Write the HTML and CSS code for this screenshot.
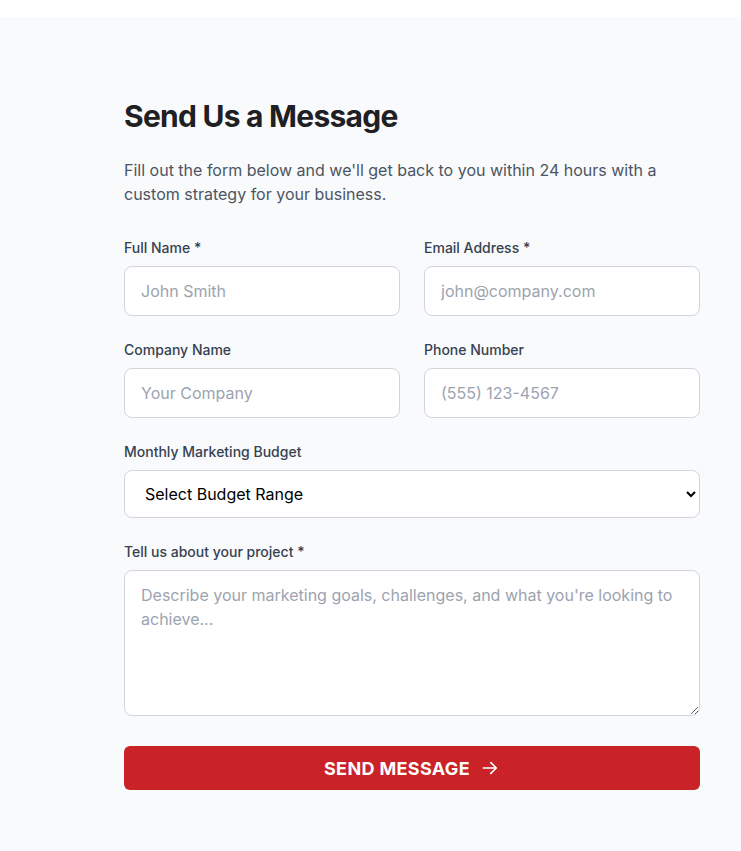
FILE: index.html
```html
<!DOCTYPE html>
<html lang="en">
<head>
<meta charset="utf-8">
<title>Contact</title>
<link rel="stylesheet" href="styles.css">
</head>
<body>
<div class="topbar"></div>
<section class="contact">
  <div class="wrap">
    <h2 class="title">Send Us a Message</h2>
    <p class="lead">Fill out the form below and we'll get back to you within 24 hours with a custom strategy for your business.</p>
    <form class="form">
      <div class="row">
        <div class="field">
          <label class="label">Full Name *</label>
          <input class="input" type="text" placeholder="John Smith">
        </div>
        <div class="field">
          <label class="label">Email Address *</label>
          <input class="input" type="email" placeholder="john@company.com">
        </div>
      </div>
      <div class="row">
        <div class="field">
          <label class="label">Company Name</label>
          <input class="input" type="text" placeholder="Your Company">
        </div>
        <div class="field">
          <label class="label">Phone Number</label>
          <input class="input" type="tel" placeholder="(555) 123-4567">
        </div>
      </div>
      <div class="field">
        <label class="label">Monthly Marketing Budget</label>
        <select class="select">
          <option>Select Budget Range</option>
          <option>$1,000 - $5,000</option>
          <option>$5,000 - $10,000</option>
        </select>
      </div>
      <div class="field">
        <label class="label">Tell us about your project *</label>
        <textarea class="textarea" rows="5" placeholder="Describe your marketing goals, challenges, and what you're looking to achieve..."></textarea>
      </div>
      <button class="btn" type="button">SEND MESSAGE
        <svg class="arrow" width="20" height="20" viewBox="0 0 24 24" fill="none" stroke="currentColor" stroke-width="2" stroke-linecap="round" stroke-linejoin="round"><path d="M4 12h15"/><path d="M13 5.5l6.5 6.5-6.5 6.5"/></svg>
      </button>
    </form>
  </div>
</section>
</body>
</html>
```
FILE: styles.css
```css
* { box-sizing: border-box; }
html, body { margin: 0; padding: 0; }
body {
  font-family: Inter, "Liberation Sans", sans-serif;
  background: #f9fafb;
  color: #111827;
}
.topbar { height: 17px; background: #ffffff; }
.contact { padding: 81px 41px 60px 124px; }
.wrap { width: 576px; }
.title {
  margin: 0 0 24px;
  font-size: 30px;
  line-height: 36px;
  font-weight: 700;
  color: #1f2023;
  letter-spacing: -0.75px;
}
.lead {
  margin: 0 0 32px;
  font-size: 16px;
  line-height: 24px;
  color: #4b5563;
}
.form { display: flex; flex-direction: column; gap: 24px; }
.row { display: grid; grid-template-columns: minmax(0, 1fr) minmax(0, 1fr); gap: 24px; }
.field { display: flex; flex-direction: column; min-width: 0; }
.label {
  font-size: 14px;
  line-height: 20px;
  font-weight: 500;
  color: #374151;
  margin-bottom: 8px;
}
.input, .textarea, .select {
  width: 100%;
  font-family: inherit;
  font-size: 16px;
  border: 1px solid #d1d5db;
  border-radius: 8px;
  background: #ffffff;
  color: #111827;
  outline: none;
}
.input {
  height: 50px;
  padding: 12px 16px;
  line-height: 24px;
}
.input::placeholder, .textarea::placeholder { color: #9ca3af; }
.select {
  height: 48px;
  padding: 0 16px;
  color: #000000;
}
.textarea {
  display: block;
  padding: 12px 16px;
  line-height: 24px;
  height: 146px;
  resize: vertical;
}
.btn {
  margin-top: 6px;
  height: 44px;
  border: none;
  border-radius: 6px;
  background: #c92227;
  color: #ffffff;
  font-family: inherit;
  font-size: 18px;
  font-weight: 700;
  letter-spacing: 0.35px;
  display: flex;
  align-items: center;
  justify-content: center;
  gap: 10px;
  cursor: pointer;
}
.arrow { display: block; }
```
